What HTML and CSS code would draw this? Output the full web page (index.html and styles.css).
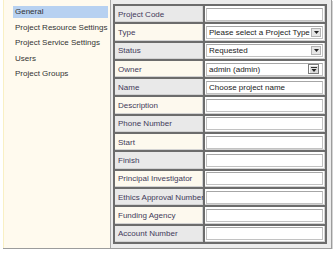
FILE: index.html
```html
<!DOCTYPE html>
<html lang="en">
<head>
    <meta charset="UTF-8">
    <title>Project Settings</title>
    <link rel="stylesheet" href="styles.css">
</head>
<body>
    <div class="frame">
        <ul class="menu">
            <li class="menu-item active">General</li>
            <li class="menu-item">Project Resource Settings</li>
            <li class="menu-item">Project Service Settings</li>
            <li class="menu-item">Users</li>
            <li class="menu-item">Project Groups</li>
        </ul>

        <div class="content">
            <table class="form">
                <tr class="grey"><th>Project Code</th><td><div class="field"></div></td></tr>
                <tr class="cream"><th>Type</th><td>
                    <div class="field select">
                        <span>Please select a Project Type</span>
                        <span class="drop">
                            <svg width="5" height="3" viewBox="0 0 5 3"><path d="M0 0h5L2.5 3z" fill="#222"/></svg>
                        </span>
                    </div>
                </td></tr>
                <tr class="grey"><th>Status</th><td>
                    <div class="field select">
                        <span>Requested</span>
                        <span class="drop">
                            <svg width="5" height="3" viewBox="0 0 5 3"><path d="M0 0h5L2.5 3z" fill="#222"/></svg>
                        </span>
                    </div>
                </td></tr>
                <tr class="cream"><th>Owner</th><td>
                    <div class="field select owner">
                        <span>admin (admin)</span>
                        <span class="drop combo">
                            <svg width="6" height="5" viewBox="0 0 6 5"><path d="M0 0h6v1H0z" fill="#333"/><path d="M0.5 2h5L3 5z" fill="#222"/></svg>
                        </span>
                    </div>
                </td></tr>
                <tr class="grey"><th>Name</th><td><div class="field">Choose project name</div></td></tr>
                <tr class="cream"><th>Description</th><td><div class="field"></div></td></tr>
                <tr class="grey"><th>Phone Number</th><td><div class="field"></div></td></tr>
                <tr class="cream"><th>Start</th><td><div class="field"></div></td></tr>
                <tr class="grey"><th>Finish</th><td><div class="field"></div></td></tr>
                <tr class="cream"><th>Principal Investigator</th><td><div class="field"></div></td></tr>
                <tr class="grey"><th>Ethics Approval Number</th><td><div class="field"></div></td></tr>
                <tr class="cream"><th>Funding Agency</th><td><div class="field"></div></td></tr>
                <tr class="grey"><th>Account Number</th><td><div class="field"></div></td></tr>
            </table>
        </div>
    </div>
</body>
</html>
```

FILE: styles.css
```css
* { box-sizing: border-box; }
body {
    margin: 0;
    background: #fff;
    font-family: 'Liberation Sans', Arial, sans-serif;
    font-size: 8px;
    color: #333;
}

.frame {
    display: flex;
    margin-left: 3px;
    width: 329px;
    height: 249px;
    border-right: 1px solid #9c9c9c;
    border-bottom: 1px solid #9c9c9c;
    box-shadow: 1px 1px 0 #d4d4d4;
}

.menu {
    list-style: none;
    margin: 0;
    padding: 6px 2px 0 9px;
    width: 107px;
    background: #fffaee;
    border-left: 1px solid #f9f0c4;
}
.menu-item {
    height: 12px;
    line-height: 12px;
    padding: 0 2px;
    margin-bottom: 3.6px;
    white-space: nowrap;
}
.menu-item.active {
    background: #b7d1f1;
}

.content {
    flex: 1;
    background: #ececec;
    border-left: 1px solid #a8a8a8;
    padding: 4px 2px 0 2px;
}

.form {
    border-collapse: separate;
    border-spacing: 0;
    border: 1px solid #6c6c6c;
    width: 214px;
    table-layout: fixed;
}
.form th,
.form td {
    border: 1px solid #6c6c6c;
    height: 18.3px;
    padding: 0;
    box-shadow: inset -1px -1px 0 #d2d2d2;
}
.form th {
    width: 90px;
    text-align: left;
    font-weight: normal;
    padding-left: 3px;
    color: #42395a;
    white-space: nowrap;
    overflow: hidden;
}
.form td {
    background: #fff;
    padding: 0 2px 0 1px;
}
.grey th { background: #e9e9e9; }
.cream th { background: #fdf9ee; }

.field {
    height: 13px;
    line-height: 11px;
    border: 1px solid #c2c2c2;
    border-top-color: #a6a6a6;
    background: #fff;
    padding-left: 2px;
    white-space: nowrap;
    overflow: hidden;
    color: #222;
}
.select {
    display: flex;
    align-items: center;
    justify-content: space-between;
    padding-right: 1px;
}
.drop {
    display: flex;
    align-items: center;
    justify-content: center;
    width: 10px;
    height: 9px;
    background: #e6e6e6;
    border: 1px solid #b4b4b4;
}
.owner {
    padding-right: 3px;
}
.combo {
    width: 11px;
    height: 10px;
    background: #dcdcdc;
    border: 1px solid #7c7c7c;
    box-shadow: inset 1px 1px 0 #fff;
}
```
